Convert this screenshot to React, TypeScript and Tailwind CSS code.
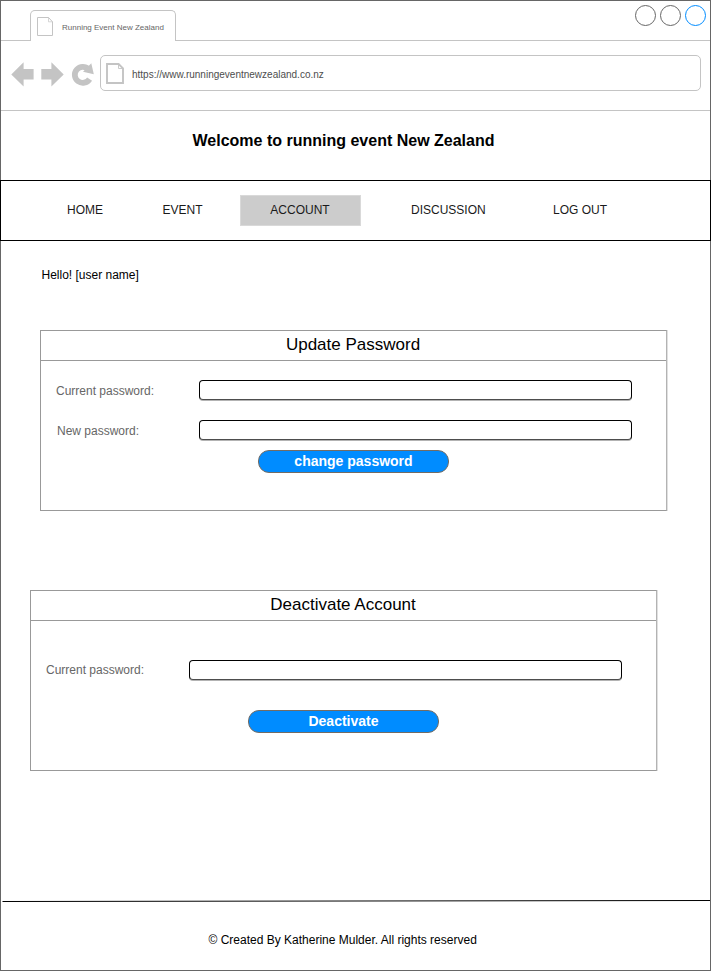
import type { ReactNode } from "react";

function TabPage() {
  return (
    <svg width="17" height="20" viewBox="0 0 17 20" fill="none" stroke="#c4c4c4" className="block shrink-0">
      <path d="M.5 .5H11.5L15.5 4.8V18.5H.5Z" />
      <path d="M11.5 .5V4.8H15.5" strokeWidth=".7" />
    </svg>
  );
}

function AddressPage() {
  return (
    <svg width="18" height="21" viewBox="0 0 18 21" fill="none" stroke="#c4c4c4" className="block shrink-0">
      <path d="M1 1H12.6L17 5.4V20H1Z" strokeWidth="1.9" />
      <path d="M12.5 1V5.5H17" strokeWidth=".9" />
    </svg>
  );
}

function BrowserArrows() {
  return (
    <svg width="83" height="26" viewBox="0 0 83 26" fill="#c4c4c4" className="block shrink-0">
      <path d="M.3 13.4L12.6 1.3V8H22.6V18.4H12.6V25.6Z" />
      <path d="M52.7 13.4L40.4 1.3V8H30.3V18.4H40.4V25.6Z" />
      <path d="M77.5 8.2A8 8 0 1 0 78.6 18.1" fill="none" stroke="#c4c4c4" strokeWidth="5.8" />
      <path d="M80.3 2.3L82.8 13.3L72 10.8Z" />
    </svg>
  );
}

function Panel({ title, className, children }: { title: string; className: string; children: ReactNode }) {
  return (
    <section className={`h-[181px] w-[627px] border border-[#999999] border-r-[#b3b3b3] shadow-[1px_0_0_#e0e0e0] ${className}`}>
      <h2 className="flex h-[30px] justify-center border-b border-[#999999] pr-px text-[17px] leading-[27px] text-black">
        {title}
      </h2>
      {children}
    </section>
  );
}

function Field({ label, labelClass, className }: { label: string; labelClass: string; className: string }) {
  return (
    <label className={`ml-[15px] flex h-[21px] text-xs text-[#666666] ${className}`}>
      <span className={`w-[143px] whitespace-nowrap ${labelClass}`}>{label}</span>
      <input
        type="password"
        className="h-[20px] w-[433px] rounded-[4px] border border-black border-b-[#4d4d4d] bg-white shadow-[0_1px_0_#b3b3b3] outline-none"
      />
    </label>
  );
}

function ActionButton({ children, className }: { children: string; className: string }) {
  return (
    <button className={`ml-[217px] flex h-[23px] w-[191px] justify-center rounded-[11px] border border-[#736c64] bg-[#008cff] text-sm leading-[21px] font-bold text-white ${className}`}>
      {children}
    </button>
  );
}

export default function App() {
  return (
    <div className="flex h-[971px] w-[711px] flex-col border border-[#666666] bg-white font-['Liberation_Sans',Arial,sans-serif]">
      <div className="flex h-10 items-end">
        <div className="w-[29px] border-b border-[#c4c4c4]" />
        <div className="flex h-[31px] w-[146px] rounded-t-[5px] border border-b-0 border-[#c4c4c4] pt-[6px] pl-[6px] text-[8px] text-[#666666]">
          <TabPage />
          <span className="ml-2 pt-[2px] leading-[18px] whitespace-nowrap">Running Event New Zealand</span>
        </div>
        <div className="flex h-10 flex-1 justify-end gap-1 border-b border-[#c4c4c4] pt-1 pr-1">
          <i className="size-[21px] rounded-full border border-[#666666]" />
          <i className="size-[21px] rounded-full border border-[#666666]" />
          <i className="size-[21px] rounded-full border border-[#008cff]" />
        </div>
      </div>
      <div className="flex h-[70px] border-b border-[#c4c4c4] pt-[14px] pl-[10px]">
        <div className="mt-[6px] w-[89px]">
          <BrowserArrows />
        </div>
        <div className="flex h-9 w-[601px] rounded-[5px] border border-[#c4c4c4] pt-[7px] pl-[5px] text-[10px] text-[#4d4d4d]">
          <AddressPage />
          <span className="ml-2 pt-px leading-[22px] whitespace-nowrap">https://www.runningeventnewzealand.co.nz</span>
        </div>
      </div>
      <h1 className="h-[69px] pt-[18px] pl-[191.5px] text-base leading-6 font-bold whitespace-nowrap text-black">
        Welcome to running event New Zealand
      </h1>
      <nav className="-mx-px flex h-[61px] border border-black pt-[14px] text-xs leading-[31px] text-[#1a1a1a]">
        <a className="ml-[66px] w-[95.5px]">HOME</a>
        <a className="w-[77.5px]">EVENT</a>
        <a className="h-[31px] w-[121px] border border-[#d9d9d9] bg-[#cccccc] pr-px text-center leading-[29px]">ACCOUNT</a>
        <a className="ml-[50px] w-[142px]">DISCUSSION</a>
        <a>LOG OUT</a>
      </nav>
      <main className="h-[659px]">
        <p className="h-[89px] pt-[25px] pl-[40.5px] text-xs leading-[18px] text-black">Hello! [user name]</p>
        <Panel title="Update Password" className="ml-[39px]">
          <Field label="Current password:" labelClass="leading-[23px]" className="mt-[19px]" />
          <Field label="New password:" labelClass="pl-px leading-[23px]" className="mt-[19px]" />
          <ActionButton className="mt-[9px]">change password</ActionButton>
        </Panel>
        <Panel title="Deactivate Account" className="mt-[79px] ml-[29px]">
          <Field label="Current password:" labelClass="leading-[21px]" className="mt-[39px]" />
          <ActionButton className="mt-[29px]">Deactivate</ActionButton>
        </Panel>
      </main>
      <footer className="text-xs text-black">
        <svg width="709" height="2" viewBox="0 0 709 2" className="block">
          <path d="M1.5 1.5L709 .5" stroke="black" />
        </svg>
        <p className="pt-[29px] pl-[207.5px] leading-[18px]">© Created By Katherine Mulder. All rights reserved</p>
      </footer>
    </div>
  );
}
